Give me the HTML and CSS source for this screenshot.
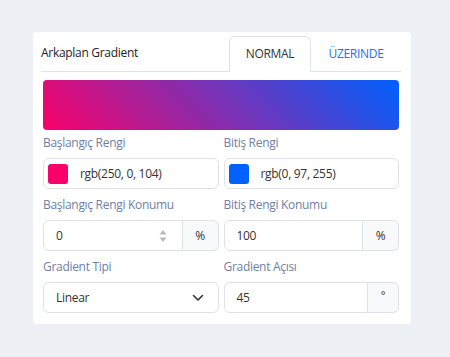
FILE: index.html
```html
<!DOCTYPE html>
<html lang="tr">
<head>
<meta charset="utf-8">
<link rel="stylesheet" href="styles.css">
</head>
<body>
<div class="card">
  <div class="header">
    <div class="title">Arkaplan Gradient</div>
    <div class="tabs">
      <div class="tab active">NORMAL</div>
      <div class="tab second">ÜZERINDE</div>
    </div>
  </div>
  <div class="body">
    <div class="preview"></div>
    <div class="grid">
      <div class="field">
        <div class="label">Başlangıç Rengi</div>
        <div class="input color">
          <span class="swatch pink"></span>
          <span class="value">rgb(250, 0, 104)</span>
        </div>
      </div>
      <div class="field">
        <div class="label">Bitiş Rengi</div>
        <div class="input color">
          <span class="swatch blue"></span>
          <span class="value">rgb(0, 97, 255)</span>
        </div>
      </div>
      <div class="field">
        <div class="label">Başlangıç Rengi Konumu</div>
        <div class="group">
          <div class="input main">
            <span class="value">0</span>
            <span class="spin">
              <svg width="8" height="14" viewBox="0 0 8 14"><path d="M4 1 L7.5 5.5 H0.5 Z" fill="#b5b9bf"/><path d="M4 13 L7.5 8.5 H0.5 Z" fill="#b5b9bf"/></svg>
            </span>
          </div>
          <div class="addon">%</div>
        </div>
      </div>
      <div class="field">
        <div class="label">Bitiş Rengi Konumu</div>
        <div class="group">
          <div class="input main"><span class="value">100</span></div>
          <div class="addon">%</div>
        </div>
      </div>
      <div class="field">
        <div class="label">Gradient Tipi</div>
        <div class="input select">
          <span class="value">Linear</span>
          <svg class="chev" width="12" height="8" viewBox="0 0 12 8"><path d="M1.5 1.5 L6 6 L10.5 1.5" fill="none" stroke="#333" stroke-width="1.6" stroke-linecap="round" stroke-linejoin="round"/></svg>
        </div>
      </div>
      <div class="field">
        <div class="label">Gradient Açısı</div>
        <div class="group">
          <div class="input main"><span class="value">45</span></div>
          <div class="addon deg">°</div>
        </div>
      </div>
    </div>
  </div>
</div>
</body>
</html>
```
FILE: styles.css
```css
* { box-sizing: border-box; }
html, body { margin: 0; padding: 0; }
body {
  background: #edf1f5;
  font-family: "Open Sans", "Noto Sans", sans-serif;
  font-size: 12px;
  letter-spacing: -0.3px;
  color: #333;
  padding: 32px 39px 0 33px;
}
.card {
  background: #fff;
  border-radius: 4px;
  width: 378px;
  height: 292px;
  padding-top: 5px;
}
.header {
  display: flex;
  justify-content: space-between;
  align-items: flex-end;
  margin: 0 10px 0 8px;
  border-bottom: 1px solid #dfe2e6;
  height: 35px;
}
.title {
  align-self: center;
  color: #222;
  padding-bottom: 4px;
}
.tabs { display: flex; margin-bottom: -1px; }
.tab {
  width: 82px;
  height: 35px;
  line-height: 34px;
  text-align: center;
  color: #1f6fff;
  border: 1px solid transparent;
  border-bottom: none;
}
.tab.second { width: 90px; }
.tab.active {
  color: #333;
  border-color: #dfe2e6;
  border-radius: 6px 6px 0 0;
  background: #fff;
  height: 36px;
}
.body { padding: 8px 12px 0 10px; }
.preview {
  height: 50px;
  border-radius: 4px;
  background: linear-gradient(45deg, rgb(250, 0, 104) 0%, rgb(0, 97, 255) 100%);
}
.grid {
  display: grid;
  grid-template-columns: 1fr 1fr;
  column-gap: 5px;
  row-gap: 7px;
  margin-top: 4px;
}
.label {
  color: #6e7fa6;
  line-height: 18px;
  margin-bottom: 6px;
}
.input {
  height: 31px;
  border: 1px solid #dee2e7;
  border-radius: 6px;
  display: flex;
  align-items: center;
  padding-left: 12px;
  background: #fff;
  color: #333;
}
.input.color { padding-left: 4px; }
.swatch {
  width: 20px;
  height: 20px;
  border-radius: 3px;
  margin-right: 12px;
}
.swatch.pink { background: rgb(250, 0, 104); }
.swatch.blue { background: rgb(0, 97, 255); }
.group { display: flex; }
.group .input.main {
  flex: 1;
  border-radius: 6px 0 0 6px;
  justify-content: space-between;
  padding-right: 15px;
}
.spin { display: flex; align-items: center; }
.addon {
  width: 36px;
  height: 31px;
  border: 1px solid #dee2e7;
  border-left: none;
  border-radius: 0 6px 6px 0;
  background: #f8f9fb;
  display: flex;
  align-items: center;
  justify-content: center;
  color: #333;
}
.addon.deg { width: 31px; font-size: 11px; padding-bottom: 6px; }
.select { justify-content: space-between; padding-right: 14px; }
.chev { display: block; }
```
